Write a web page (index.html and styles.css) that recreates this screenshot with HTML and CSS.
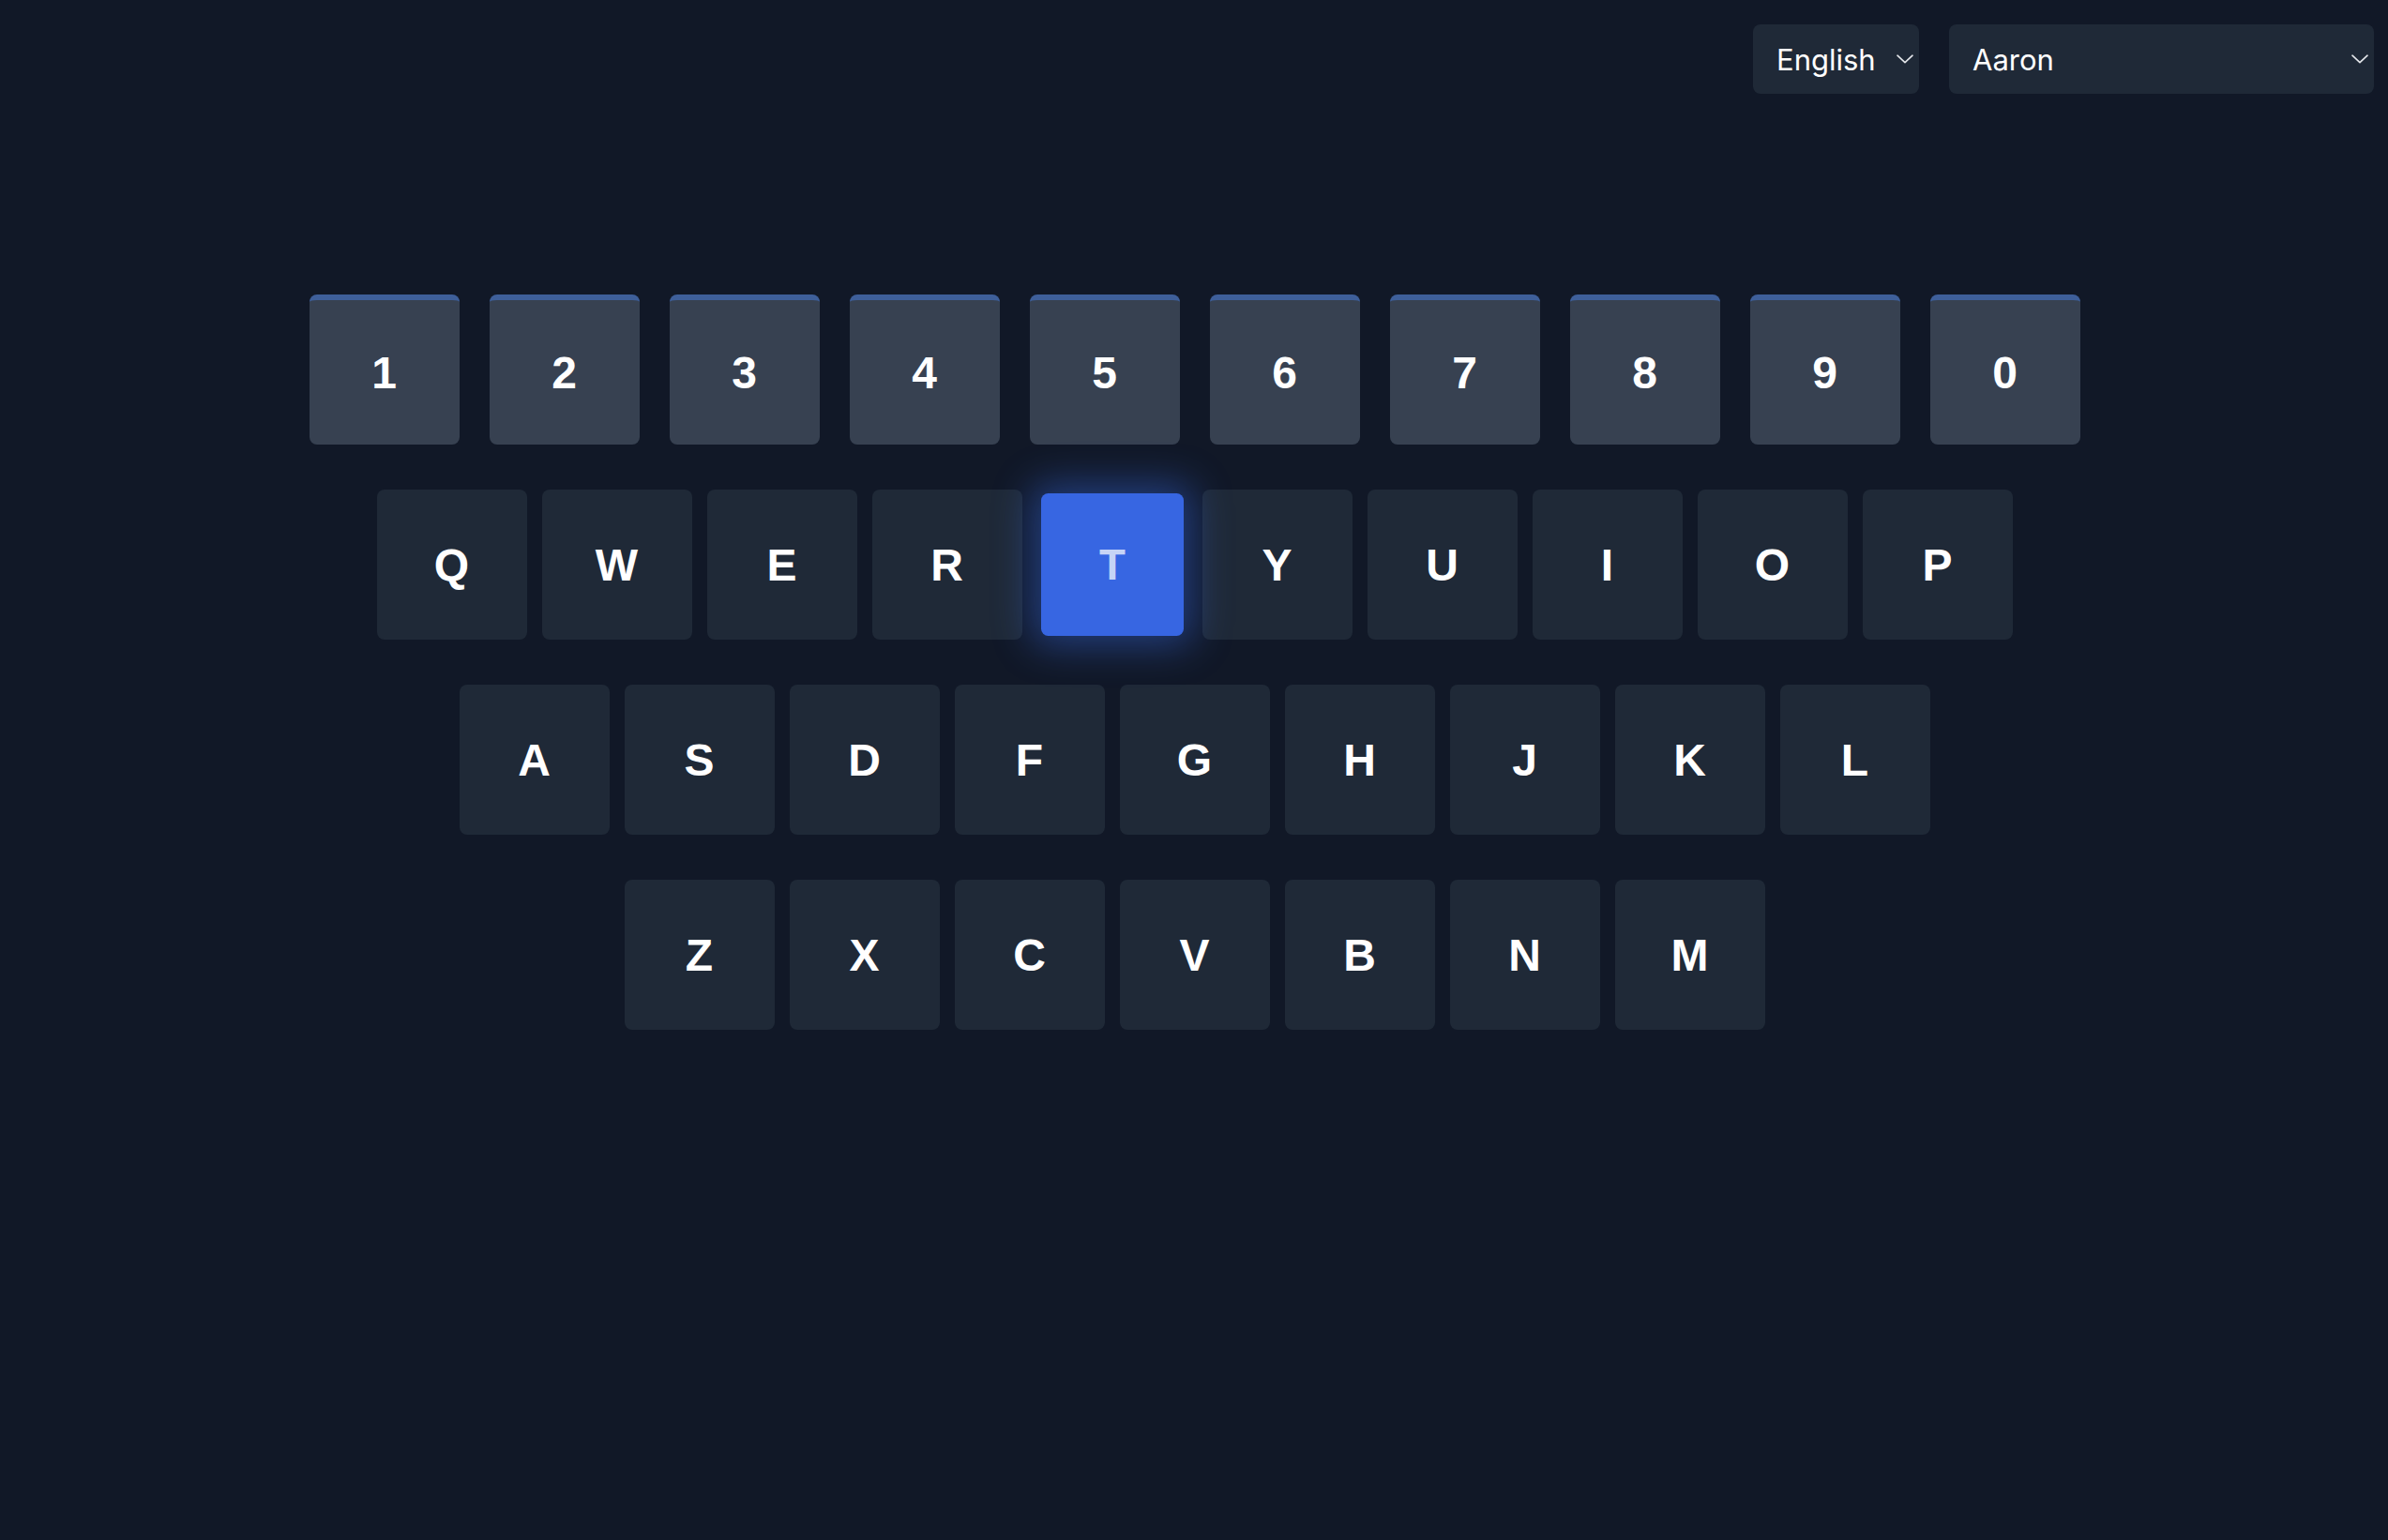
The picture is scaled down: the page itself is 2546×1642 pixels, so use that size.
FILE: index.html
```html
<!DOCTYPE html>
<html lang="en">
<head>
<meta charset="utf-8">
<title>Keyboard</title>
<link rel="stylesheet" href="styles.css">
</head>
<body>
<header class="topbar">
  <div class="select-wrap lang">
    <select class="select"><option>English</option></select>
    <svg class="chev" viewBox="0 0 18 10" width="18" height="10"><path d="M1 1.2 L9 8.6 L17 1.2" fill="none" stroke="#e5e7eb" stroke-width="1.6" stroke-linecap="round" stroke-linejoin="round"/></svg>
  </div>
  <div class="select-wrap voice">
    <select class="select"><option>Aaron</option></select>
    <svg class="chev" viewBox="0 0 18 10" width="18" height="10"><path d="M1 1.2 L9 8.6 L17 1.2" fill="none" stroke="#e5e7eb" stroke-width="1.6" stroke-linecap="round" stroke-linejoin="round"/></svg>
  </div>
</header>
<main class="keyboard">
  <div class="row row-num">
    <div class="key num">1</div><div class="key num">2</div><div class="key num">3</div><div class="key num">4</div><div class="key num">5</div><div class="key num">6</div><div class="key num">7</div><div class="key num">8</div><div class="key num">9</div><div class="key num">0</div>
  </div>
  <div class="row">
    <div class="key">Q</div><div class="key">W</div><div class="key">E</div><div class="key">R</div><div class="key active">T</div><div class="key">Y</div><div class="key">U</div><div class="key">I</div><div class="key">O</div><div class="key">P</div>
  </div>
  <div class="row">
    <div class="key">A</div><div class="key">S</div><div class="key">D</div><div class="key">F</div><div class="key">G</div><div class="key">H</div><div class="key">J</div><div class="key">K</div><div class="key">L</div>
  </div>
  <div class="row">
    <div class="key">Z</div><div class="key">X</div><div class="key">C</div><div class="key">V</div><div class="key">B</div><div class="key">N</div><div class="key">M</div>
  </div>
</main>
</body>
</html>
```
FILE: styles.css
```css
html, body {
  margin: 0;
  padding: 0;
}
body {
  background: #111827;
  min-height: 100vh;
  font-family: Inter, "Noto Sans", sans-serif;
  color: #ffffff;
}
.topbar {
  display: flex;
  justify-content: flex-end;
  gap: 32px;
  padding: 26px 15px 0 0;
}
.select-wrap {
  position: relative;
  height: 74px;
}
.select-wrap.lang { width: 177px; }
.select-wrap.voice { width: 453px; }
.select {
  appearance: none;
  -webkit-appearance: none;
  width: 100%;
  height: 100%;
  border: none;
  border-radius: 8px;
  background: #1f2937;
  color: #ffffff;
  font-family: Inter, "Noto Sans", sans-serif;
  font-size: 31px;
  padding: 0 0 0 25px;
  outline: none;
}
.chev {
  position: absolute;
  right: 6px;
  top: 32px;
  pointer-events: none;
}
.keyboard {
  display: flex;
  flex-direction: column;
  gap: 48px;
  margin-top: 214px;
  padding-left: 1px;
}
.row {
  display: flex;
  justify-content: center;
  gap: 16px;
}
.row-num {
  gap: 32px;
}
.key {
  box-sizing: border-box;
  width: 160px;
  height: 160px;
  border-radius: 8px;
  background: #1f2937;
  display: flex;
  align-items: center;
  justify-content: center;
  font-family: "Liberation Sans", Arial, sans-serif;
  font-size: 48px;
  font-weight: 700;
  color: #ffffff;
}
.key.num {
  background: #374151;
  border-top: 6px solid #3e5f9a;
}
.key.active {
  background: #3766e2;
  color: #c6d4f6;
  transform: scale(0.95);
  box-shadow: 0 0 44px 10px rgba(59, 115, 246, 0.42);
}
```
